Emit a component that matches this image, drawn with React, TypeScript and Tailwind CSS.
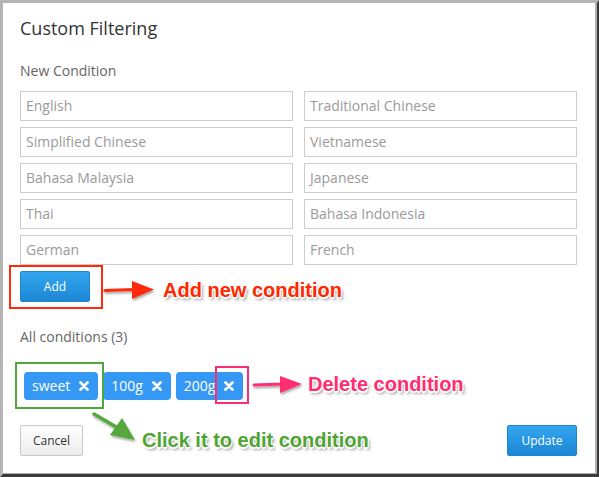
import React from "react";

const leftCol = ["English", "Simplified Chinese", "Bahasa Malaysia", "Thai", "German"];
const rightCol = ["Traditional Chinese", "Vietnamese", "Japanese", "Bahasa Indonesia", "French"];
const ordered: string[] = [];
leftCol.forEach((l, i) => {
  ordered.push(l);
  ordered.push(rightCol[i]);
});

function XIcon() {
  return (
    <svg width="10" height="10" viewBox="0 0 10 10" className="block">
      <path d="M1.5 1.5 L8.5 8.5 M8.5 1.5 L1.5 8.5" stroke="#fff" strokeWidth="2.7" strokeLinecap="round" />
    </svg>
  );
}

function Tag({ label }: { label: string }) {
  return (
    <div className="flex items-center h-[28px] rounded-[4px] bg-[#3598f4] pl-[8px] pr-[9px] text-white text-[14px] leading-[28px]">
      <span>{label}</span>
      <span className="ml-[9px]">
        <XIcon />
      </span>
    </div>
  );
}

const annoShadow =
  "[text-shadow:1px_1px_0_#fff,-1px_-1px_0_#fff,1px_-1px_0_#fff,-1px_1px_0_#fff,0_2px_0_#fff,2px_3px_3px_rgba(0,0,0,0.4)]";

export default function App() {
  return (
    <div className="relative w-[599px] h-[477px] font-['Open_Sans',sans-serif]">
      <div className="w-full h-full border-t-[3px] border-l-[3px] border-r-[2px] border-b-[3px] border-t-[#b5b5b5] border-l-[#b5b5b5] border-r-[#3a3a3a] border-b-[#3a3a3a]">
        <div className="w-full h-full bg-white border-r-[2px] border-b-[1px] border-[#b0b0b0] pl-[17px] pr-[18px] pt-[13px]">
          <div className="text-[18px] leading-[24px] text-[#333]">Custom Filtering</div>
          <div className="mt-[22px] text-[14px] leading-[18px] text-[#666]">New Condition</div>
          <div className="mt-[11px] grid grid-cols-2 gap-x-[11px] gap-y-[6px] w-[557px]">
            {ordered.map((p) => (
              <div
                key={p}
                className="h-[30px] border border-[#cccccc] bg-white px-[5px] text-[14px] leading-[28px] text-[#9a9a9a]"
              >
                {p}
              </div>
            ))}
          </div>
          <div className="mt-[6px] flex">
            <div className="w-[70px] h-[31px] rounded-[2px] border border-[#1f84cc] bg-gradient-to-b from-[#33a6f0] to-[#1c87d4] text-white text-[12px] leading-[29px] text-center">
              Add
            </div>
          </div>
          <div className="mt-[26px] text-[14px] leading-[18px] text-[#666]">All conditions (3)</div>
          <div className="mt-[26px] flex gap-[5px] pl-[4px]">
            <Tag label="sweet" />
            <Tag label="100g" />
            <Tag label="200g" />
          </div>
          <div className="mt-[25px] flex justify-between">
            <div className="w-[63px] h-[31px] rounded-[2px] border border-[#c8c8c8] bg-gradient-to-b from-white to-[#ececec] text-[#333] text-[12px] leading-[29px] text-center">
              Cancel
            </div>
            <div className="w-[70px] h-[31px] rounded-[2px] border border-[#1f84cc] bg-gradient-to-b from-[#33a6f0] to-[#1c87d4] text-white text-[12px] leading-[29px] text-center">
              Update
            </div>
          </div>
        </div>
      </div>

      {/* Annotation: red box around Add */}
      <div className="absolute left-[9px] top-[265px] w-[94px] h-[44px] border-2 border-[#ff2b0a]" />
      {/* red arrow */}
      <svg className="absolute left-[100px] top-[278px]" width="60" height="26" viewBox="0 0 60 26">
        <defs>
          <filter id="sh1" x="-20%" y="-40%" width="140%" height="180%">
            <feDropShadow dx="1" dy="2" stdDeviation="1.2" floodColor="#000" floodOpacity="0.35" />
          </filter>
        </defs>
        <g filter="url(#sh1)">
          <path d="M5 12.5 L34 11.5" stroke="#ff2b0a" strokeWidth="3.2" strokeLinecap="round" />
          <path d="M32 3 L54 11.5 L32 21 Z" fill="#ff2b0a" />
        </g>
      </svg>
      <div
        className={`absolute left-[163px] top-[278px] text-[20px] leading-[24px] font-bold text-[#ff2600] font-['Liberation_Sans',Arial,sans-serif] whitespace-nowrap ${annoShadow}`}
      >
        Add new condition
      </div>

      {/* green box around sweet */}
      <div className="absolute left-[15px] top-[362px] w-[89px] h-[47px] border-2 border-[#4fa83c]" />
      {/* green arrow */}
      <svg className="absolute left-[88px] top-[408px]" width="58" height="42" viewBox="0 0 58 42">
        <defs>
          <filter id="sh2" x="-30%" y="-30%" width="160%" height="160%">
            <feDropShadow dx="1" dy="2" stdDeviation="1.2" floodColor="#000" floodOpacity="0.35" />
          </filter>
        </defs>
        <g filter="url(#sh2)">
          <path d="M6 6 L30 20" stroke="#55a83a" strokeWidth="3.5" strokeLinecap="round" />
          <path d="M22 27 L34 10 L47 32 Z" fill="#55a83a" />
        </g>
      </svg>
      <div
        className={`absolute left-[142px] top-[428px] text-[20px] leading-[24px] font-bold text-[#4ea532] font-['Liberation_Sans',Arial,sans-serif] whitespace-nowrap ${annoShadow}`}
      >
        Click it to edit condition
      </div>

      {/* pink box around x */}
      <div className="absolute left-[215px] top-[366px] w-[34px] h-[38px] border-2 border-[#ff2d6f]" />
      {/* pink arrow */}
      <svg className="absolute left-[250px] top-[372px]" width="56" height="26" viewBox="0 0 56 26">
        <defs>
          <filter id="sh3" x="-20%" y="-40%" width="140%" height="180%">
            <feDropShadow dx="1" dy="2" stdDeviation="1.2" floodColor="#000" floodOpacity="0.35" />
          </filter>
        </defs>
        <g filter="url(#sh3)">
          <path d="M4 13 L32 12" stroke="#ff2d6f" strokeWidth="3" strokeLinecap="round" />
          <path d="M30 4 L52 12 L30 21 Z" fill="#ff2d6f" />
        </g>
      </svg>
      <div
        className={`absolute left-[308px] top-[372px] text-[20px] leading-[24px] font-bold text-[#ff2d6f] font-['Liberation_Sans',Arial,sans-serif] whitespace-nowrap ${annoShadow}`}
      >
        Delete condition
      </div>
    </div>
  );
}
